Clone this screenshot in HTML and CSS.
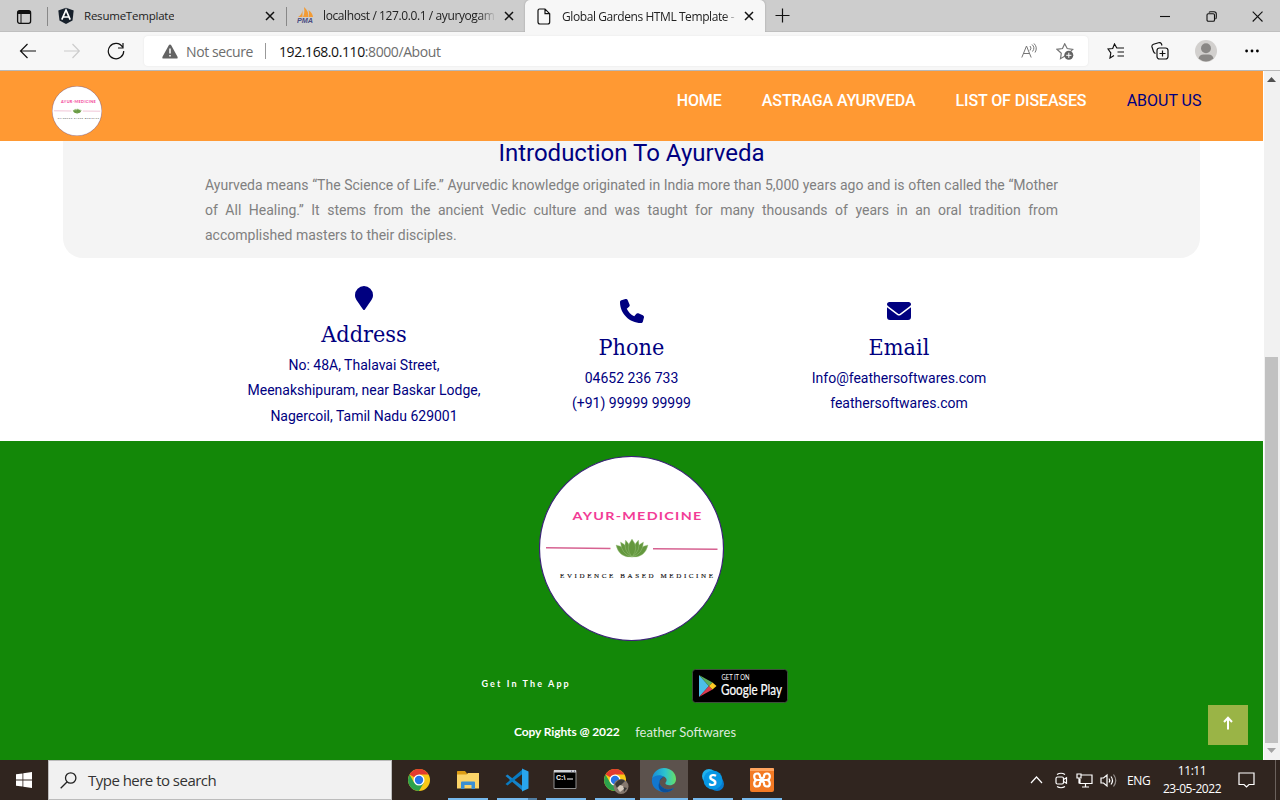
FILE: index.html
```html
<!DOCTYPE html>
<html lang="en">
<head>
<meta charset="utf-8">
<title>Global Gardens HTML Template</title>
<link rel="stylesheet" href="styles.css">
</head>
<body>
<div class="screen">
  <div class="tabstrip">
    <div class="tab-actions"><svg width="16" height="16" viewBox="0 0 16 16"><rect x="1.6" y="1.7" width="13" height="12.6" rx="2" fill="none" stroke="#111" stroke-width="1.3"/><path d="M1.6 5V3.5q0-2 2-2h9q2 0 2 2V5z" fill="#111"/><path d="M5 5v9" stroke="#111"/></svg></div>
    <div class="tab tab-one">
      <svg width="16" height="18" viewBox="0 0 16 18"><path d="M8 .8l7.7 2.7-1.2 10L8 17l-6.500-3.500L.3 3.500z" fill="#17202b"/><path d="M3.800 12.600L8 3l4.200 9.600M5.500 10h5" stroke="#fff" stroke-width="1.700" fill="none"/></svg>
      <span class="tab-title t-resume">ResumeTemplate</span>
      <svg class="close" width="10" height="10" viewBox="0 0 10 10"><path d="M1 1l8 8M9 1l-8 8"/></svg>
    </div>
    <div class="tab tab-two">
      <svg width="17" height="17" viewBox="0 0 17 17"><path d="M1 10Q5 8 5.500 3v7zM6 10Q8 6 7 0q5 4 4 10zM11.500 10q1-4 0-7 4 3 4.500 7z" fill="#f29b35"/><text x="0" y="16" class="pma" textLength="16" lengthAdjust="spacingAndGlyphs">PMA</text></svg>
      <span class="tab-title t-local">localhost / 127.0.0.1 / ayuryogam</span>
      <svg class="close" width="10" height="10" viewBox="0 0 10 10"><path d="M1 1l8 8M9 1l-8 8"/></svg>
    </div>
    <div class="tab tab-active">
      <svg width="14" height="17" viewBox="0 0 14 17"><path d="M2.500 1H8l4.700 4.700V14q0 2-2 2H3q-2 0-2-2V3q0-2 1.500-2zM8 1v4.700h4.700" fill="none" stroke="#111" stroke-width="1.200"/></svg>
      <span class="tab-title t-global">Global Gardens HTML Template -</span>
      <svg class="close" width="10" height="10" viewBox="0 0 10 10"><path d="M1 1l8 8M9 1l-8 8"/></svg>
    </div>
    <svg class="new-tab" width="15" height="15" viewBox="0 0 15 15"><path d="M.5 7.500h14M7.500.5v14" stroke="#111" stroke-width="1.200"/></svg>
    <div class="window-controls">
      <svg width="11" height="11" viewBox="0 0 11 11"><path d="M0 5.500h10"/></svg>
      <svg width="11" height="11" viewBox="0 0 11 11"><rect x="1" y="2.700" width="7.500" height="7.500" rx="1.300"/><path d="M3 1.500Q3.300.7 4.500.7H8q2.300 0 2.300 2.300v3q0 1.700-.9 2"/></svg>
      <svg width="11" height="11" viewBox="0 0 11 11"><path d="M.7.7l9.800 9.800M10.500.7L.7 10.500"/></svg>
    </div>
  </div>

  <div class="toolbar">
    <svg class="tool-nav" width="18" height="16" viewBox="0 0 18 16"><path d="M17 8H1.500M8.500 1L1.500 8l7 7"/></svg>
    <svg class="tool-nav tool-disabled" width="18" height="16" viewBox="0 0 18 16"><path d="M1 8h15M9.500 1l6.800 7-6.800 7"/></svg>
    <svg class="tool-nav" width="18" height="18" viewBox="0 0 18 18"><path d="M15.500 5A7.700 7.700 0 1 0 16.700 9M16 1v5h-5"/></svg>
    <div class="address-bar">
      <svg width="16" height="15" viewBox="0 0 16 15"><path d="M8 .5q.8 0 1.200.8l6.300 11.500q.6 1.700-.9 1.700H1.400q-1.500 0-.9-1.700L6.800 1.300Q7.200.5 8 .5z" fill="#636363"/><path d="M8 4.500v5M8 11v1.600" stroke="#fff" stroke-width="1.500"/></svg>
      <span class="not-secure">Not secure</span>
      <span class="address-divider"></span>
      <span class="url"><b>192.168.0.110</b>:8000/About</span>
      <svg class="read-aloud" width="16" height="16" viewBox="0 0 16 16" fill="none" stroke="#767676"><path d="M.8 14.500L5.500 3l4.700 11.500M2.500 10.500h6M9 3q2 2 0 4.500M11 1.500q3.500 3 .5 7M13 .5q4 4 1 9"/></svg>
      <svg class="add-star" width="18" height="17" viewBox="0 0 18 17"><path d="M9 13l-4.500 2.700.8-5.400L1 6.300l5.500-.8L8.700.8l2.500 4.700 5.500.8-2 2" fill="none" stroke="#767676" stroke-width="1.200"/><circle cx="12.800" cy="12.300" r="4.500" fill="#636363"/><path d="M12.800 9.700v5.200M10.200 12.300h5.200" stroke="#fff"/></svg>
    </div>
    <svg class="favorites" width="18" height="16" viewBox="0 0 18 16" fill="none" stroke="#111" stroke-width="1.200"><path d="M7 12.600l-4 2.400.8-5L1 6l4.700-.5L7.500 1l2.300 4H17M10.500 9H17M10.500 13H17"/></svg>
    <svg class="collections" width="18" height="18" viewBox="0 0 18 18" fill="none" stroke="#111" stroke-width="1.200"><rect x="6" y="6" width="11" height="11" rx="2.500"/><path d="M11.500 8.500v6M8.500 11.500h6M4.500 11.500q-1.500-.5-2-2L1 5q-.5-2 1.500-2.700l5-1.500q2-.6 2.900 1l.6 1.700"/></svg>
    <svg class="profile" width="22" height="22" viewBox="0 0 22 22"><circle cx="11" cy="11" r="11" fill="#d2d0ce"/><circle cx="11" cy="8.300" r="5" fill="#8a8886"/><path d="M3.500 18.500q1-4 5-4h5q4 0 5 4-7.500 6-15 0z" fill="#8a8886"/></svg>
    <svg class="more" width="14" height="4" viewBox="0 0 14 4"><circle cx="1.600" cy="2" r="1.400"/><circle cx="7" cy="2" r="1.400"/><circle cx="12.400" cy="2" r="1.400"/></svg>
  </div>

  <div class="viewport">
    <div class="page">
      <header class="site-header">
        <svg class="brand-small" width="50" height="50" viewBox="0 0 185 185"><use href="#brand"/></svg>
        <nav class="site-nav">
          <a>HOME</a><a>ASTRAGA AYURVEDA</a><a>LIST OF DISEASES</a><a class="current">ABOUT US</a>
        </nav>
      </header>
      <section class="intro">
        <h2>Introduction To Ayurveda</h2>
        <p>Ayurveda means “The Science of Life.” Ayurvedic knowledge originated in India more than 5,000 years ago and is often called the “Mother of All Healing.” It stems from the ancient Vedic culture and was taught for many thousands of years in an oral tradition from accomplished masters to their disciples.</p>
      </section>
      <section class="contacts">
        <div class="contact">
          <svg width="18" height="24" viewBox="0 0 384 512"><path d="M172.300 501.700C27 291 0 269.400 0 192a192 192 0 0 1 384 0c0 77.400-27 99-172.300 309.700a24 24 0 0 1-39.400 0z"/></svg>
          <h3>Address</h3>
          <p>No: 48A, Thalavai Street,<br>Meenakshipuram, near Baskar Lodge,<br>Nagercoil, Tamil Nadu 629001</p>
        </div>
        <div class="contact">
          <svg width="24" height="24" viewBox="0 0 512 512"><path d="M165 25c-8-19-29-29-48-24L29 25C12 30 0 46 0 64c0 247 201 448 448 448 18 0 34-12 39-29l24-88c5-20-5-41-24-49l-96-40c-17-7-36-2-47 12l-40 49c-70-33-127-90-160-160l49-40c14-12 19-31 12-47z"/></svg>
          <h3>Phone</h3>
          <p>04652 236 733<br>(+91) 99999 99999</p>
        </div>
        <div class="contact">
          <svg width="24" height="24" viewBox="0 0 512 512"><path d="M48 64a48 48 0 0 0-29 86l218 164q19 14 38 0l218-164a48 48 0 0 0-29-86zM0 176v208a64 64 0 0 0 64 64h384a64 64 0 0 0 64-64V176L294 339q-38 28-76 0z"/></svg>
          <h3>Email</h3>
          <p>Info@feathersoftwares.com<br>feathersoftwares.com</p>
        </div>
      </section>
      <footer class="site-footer">
        <svg class="brand-large" width="185" height="185" viewBox="0 0 185 185">
          <g id="brand">
            <circle cx="92.500" cy="92.500" r="92" fill="#fff" stroke="#3c2478" stroke-width="1.200"/>
            <text transform="translate(33.500 64) scale(1.250 1)" class="brand-name" textLength="103">AYUR-MEDICINE</text>
            <path d="M7 91.700l64.500.8M114 92.700l64.500.6" stroke="#d66291" stroke-width="1.400"/>
            <g fill="#64983e" stroke="#a3c98a" stroke-width=".4">
              <path d="M93 101Q80 102 77 89q9 1 16 12zM93 101q13 1 16-12-9 1-16 12z"/>
              <path d="M93 101Q82 98 81.500 86 90 90 93 101zM93 101q11-3 11.500-15-8.500 4-11.500 15z"/>
              <path d="M93 101Q84 95 86.500 84 93 90 93 101zM93 101q9-6 6.500-17-6.500 6-6.500 17z"/>
              <path d="M93 101Q85.500 92 93 83q7.500 9 0 18z"/>
            </g>
            <text x="21" y="121.700" class="brand-tag" textLength="153">EVIDENCE BASED MEDICINE</text>
          </g>
        </svg>
        <div class="app-row">
          <span class="get-app">Get In The App</span>
          <svg class="play-badge" width="96" height="34" viewBox="0 0 96 34"><rect x=".5" y=".5" width="95" height="33" rx="3" fill="#000" stroke="#555" stroke-width=".7"/><path d="M7 6v22l10-11z" fill="#4cbfe8"/><path d="M7 6l10 11 3.500-3.500z" fill="#5cae5b"/><path d="M7 28l10-11 3.500 3.500z" fill="#dc3b50"/><path d="M17 17l3.500-3.600 4 3.600-4 3.600z" fill="#fdca24"/><text x="29.500" y="11" class="badge-top" textLength="28" lengthAdjust="spacingAndGlyphs">GET IT ON</text><text x="29" y="25.500" class="badge-main" textLength="61" lengthAdjust="spacingAndGlyphs">Google Play</text></svg>
        </div>
        <div class="copy-row"><span class="copyright">Copy Rights @ 2022</span><span class="company">feather Softwares</span></div>
        <div class="to-top"><svg width="12" height="14" viewBox="0 0 12 14"><path d="M6 13.500V2M2 6l4-4.300L10 6" fill="none" stroke="#fff" stroke-width="2"/></svg></div>
      </footer>
    </div>
    <div class="scrollbar">
      <svg width="9" height="5" viewBox="0 0 9 5"><path d="M0 5L4.500 0 9 5z" fill="#505050"/></svg>
      <div class="thumb"></div>
      <svg width="9" height="5" viewBox="0 0 9 5"><path d="M0 0l4.500 5L9 0z" fill="#a3a3a3"/></svg>
    </div>
  </div>

  <div class="taskbar">
    <div class="start"><svg width="16" height="16" viewBox="0 0 16 16" fill="#fff"><path d="M0 2.300l6.500-.9v6.100H0zM7.300 1.300L16 0v7.500H7.300zM0 8.400h6.500v6.200L0 13.700zM7.300 8.400H16V16l-8.700-1.200z"/></svg></div>
    <div class="search"><svg width="17" height="17" viewBox="0 0 17 17" fill="none" stroke="#222" stroke-width="1.300"><circle cx="10.700" cy="6" r="5.200"/><path d="M7 10L.7 16.300"/></svg><span>Type here to search</span></div>
    <div class="apps">
      <div class="app"><svg width="24" height="24" viewBox="0 0 24 24"><g id="chrome"><circle cx="12" cy="12" r="11" fill="#f9c916"/><path d="M12 12L2.500 6.500A11 11 0 0 1 21.500 6.500H12z" fill="#e33b2e"/><path d="M2.500 6.500A11 11 0 0 0 12 23l4.800-8.300L12 12 7.200 14.700z" fill="#2ba24c"/><circle cx="12" cy="12" r="5.500" fill="#fff"/><circle cx="12" cy="12" r="4.200" fill="#2674e8"/></g></svg></div>
      <div class="app open"><svg width="24" height="24" viewBox="0 0 24 24"><path d="M1 3.500q0-.5.500-.5H9l2 2.500V8H1z" fill="#dd9d14"/><path d="M1 6.500h9.500L12 5h11v15.500H1z" fill="#fbd468"/><path d="M5 21v-6.500q0-1 1-1h12q1 0 1 1V21h-3.500v-4h-7v4z" fill="#3a8fd4"/></svg></div>
      <div class="app open stacked"><svg width="24" height="24" viewBox="0 0 24 24"><path d="M.5 8L2.500 6.500 18 18.500V23z" fill="#1684ca"/><path d="M.5 16l2 1.500L18 5.500V1z" fill="#087bc2"/><path d="M17 .5l6.500 3v17l-6.500 3z" fill="#29a5ed"/></svg></div>
      <div class="app open"><svg class="console" width="24" height="24" viewBox="0 0 24 24"><path d="M1 2.500h22v18H1z" fill="#000" stroke="#909090"/><path d="M1 2h22v2.500H1z" fill="#ced1d5"/><path d="M18 3.200h1M21 3.200h1" stroke="#557"/><text x="3" y="11.500" class="cmd">C:\</text><path d="M14 11h6" stroke="#fff"/></svg></div>
      <div class="app open"><svg class="chrome-user" width="26" height="26" viewBox="0 0 26 26"><use href="#chrome"/><circle cx="18" cy="18.500" r="7.500" fill="#85786e"/><path d="M12 16q5-7 10-3l-4 4-3 5zM20 19l4 1-3 4z" fill="#3b3936"/><path d="M14 20l3-3 3 1 1 3-4 3z" fill="#d6cbbd"/></svg></div>
      <div class="app open focused"><svg width="26" height="26" viewBox="0 0 26 26"><defs><linearGradient id="edgeTop"><stop stop-color="#168bd7"/><stop offset=".55" stop-color="#2cc3cf"/><stop offset="1" stop-color="#67df65"/></linearGradient></defs><path d="M1 12C2 5 7 1 13 1c7 0 12 5 12 11 0 5-4 7-8 6-3-.7-3-2-2-3 2-3-1-6-5-6-4-.5-7 .5-9 3z" fill="url(#edgeTop)"/><path d="M1 12c2-4 9-5 12-2-5 1-6 7-2 10 3 3 8 3 12 1-3 4-8 5-11 4C5 24 0 19 1 12z" fill="#1277ce"/><path d="M13 10c-5 1-6 7-2 10 3 3 8 3 12 1-3 4-8 5-11 4-6-2-6-11 1-15z" fill="#0b4f99"/></svg></div>
      <div class="app open"><svg width="24" height="24" viewBox="0 0 24 24"><circle cx="8" cy="8" r="7" fill="#20b2ed"/><circle cx="16" cy="16" r="7" fill="#067bd0"/><circle cx="12" cy="12" r="9.500" fill="#0797e4"/><text x="7.200" y="17.500" class="skype">S</text></svg></div>
      <div class="app open"><svg width="24" height="24" viewBox="0 0 24 24"><rect width="24" height="24" rx="2" fill="#f37a24"/><path d="M0 3V1q0-1 1-1h22q1 0 1 1v2z" fill="#ffa55f"/><path d="M9 5.500H7q-2.800 0-2.800 2.700Q4.200 12 7.500 12q-3.300 0-3.300 3.700 0 2.800 2.800 2.800 3 0 3-3V15q0-1.500 2-1.500t2 1.500v.5q0 3 3 3 2.800 0 2.800-2.800Q19.800 12 16.500 12q3.300 0 3.300-3.800 0-2.700-2.800-2.700-3 0-3 3 0 1.500-2 1.500t-2-1.500q0-3-3-3M7 12h10" fill="none" stroke="#fff" stroke-width="2.200"/></svg></div>
    </div>
    <div class="tray">
      <svg width="13" height="8" viewBox="0 0 13 8"><path d="M1 7l5.500-6L12 7"/></svg>
      <svg class="meet" width="13" height="17" viewBox="0 0 13 17"><rect x="1" y="5" width="7.500" height="7" rx="1.500"/><path d="M8.500 7.500l3-1.700v5.400l-3-1.700M2 2.500Q6 0 10 2.500M2 14.500q4 2.500 8 0"/></svg>
      <svg class="network" width="17" height="15" viewBox="0 0 17 15"><path d="M5.500 2H16v8.500H4V6M1 1h4v4H1zM3 5v5.500M9.500 10.500V14M6 14h7"/></svg>
      <svg class="volume" width="17" height="15" viewBox="0 0 17 15"><path d="M1 5h2.500L7 2v11L3.500 10H1zM9 5.500q1.500 2 0 4M11 3.500q3 4 0 8"/><path d="M13.500 1.500q4.500 6 0 12" opacity=".5"/></svg>
      <span class="lang">ENG</span>
      <div class="clock"><span>11:11</span><span>23-05-2022</span></div>
      <svg class="notice" width="17" height="16" viewBox="0 0 17 16"><path d="M1 1h15v11.500h-5L8.500 15 6 12.500H1z"/></svg>
      <span class="show-desktop"></span>
    </div>
  </div>
</div>
</body>
</html>
```
FILE: styles.css
```css
* { box-sizing: border-box; }
body { margin: 0; overflow: hidden; font-family: "Open Sans", sans-serif; }
svg { display: block; flex: none; }
h2, h3, p { margin: 0; font-weight: 400; }
.screen { width: 1280px; height: 800px; display: flex; flex-direction: column; overflow: hidden; background: #fff; }

.tabstrip { height: 32px; flex: none; display: flex; align-items: stretch; background: #cdcdcd; border-bottom: 1px solid #bfbfbf; font-size: 12px; color: #222; }
.tab-actions { width: 48px; display: flex; align-items: center; padding-left: 16px; border-right: 1px solid #888; height: 19px; margin-top: 7px; }
.tab { display: flex; align-items: center; white-space: nowrap; }
.tab-title { overflow: hidden; flex: none; }
.tab-one { width: 239px; padding: 0 12px 0 10px; position: relative; }
.tab-one::after { content: ""; position: absolute; right: 0; top: 7px; height: 19px; width: 1px; background: #888; }
.tab-two { width: 238px; padding-left: 10px; }
.close { margin-left: auto; stroke: #111; stroke-width: 1.5; }
.t-resume { margin-left: 10px; font-size: 11.5px; letter-spacing: -.22px; }
.t-local { width: 173px; margin-left: 9px; letter-spacing: -.4px; -webkit-mask-image: linear-gradient(90deg, #000 90%, transparent); }
.tab-two .close { margin-left: 8px; }
.tab-active { width: 240px; height: 32px; background: #f7f7f7; border-radius: 5px 5px 0 0; padding: 0 12px; box-shadow: 0 0 2px #999; clip-path: inset(0 -3px 0 -3px); }
.t-global { margin-left: 11px; width: 176px; letter-spacing: -.42px; -webkit-mask-image: linear-gradient(90deg, #000 92%, transparent); }
.tab-active .close { margin-left: 6px; }
.new-tab { margin: 8px 0 0 10px; }
.window-controls { margin-left: auto; display: flex; gap: 35px; padding: 11px 17.5px 0 0; }
.window-controls svg { fill: none; stroke: #111; stroke-width: 1.1; }
.pma { font: italic 700 6.5px "Liberation Sans", sans-serif; fill: #4b4d83; }

.toolbar { height: 38px; flex: none; display: flex; align-items: center; background: #f7f7f7; padding-left: 19px; }
.tool-nav { fill: none; stroke: #111; stroke-width: 1.2; margin-right: 26px; }
.tool-disabled { stroke: #ccc; }
.address-bar { width: 944px; height: 30px; background: #fff; border-radius: 4px; box-shadow: 0 0 2px #e3e3e3; display: flex; align-items: center; padding: 0 14px 0 18px; margin-left: -7px; font-size: 14px; color: #6d6d6d; }
.not-secure { margin-left: 8px; width: 79px; letter-spacing: -.4px; white-space: nowrap; }
.address-divider { width: 1px; height: 16px; background: #999; margin-right: 13px; }
.url { letter-spacing: -.41px; }
.url b { color: #111; font-weight: 400; }
.read-aloud { margin-left: auto; margin-right: 19px; }
.favorites { margin-left: 19px; }
.collections { margin-left: 26px; }
.profile { margin-left: 26px; }
.more { margin-left: 28px; }

.viewport { height: 690px; flex: none; display: flex; border-top: 1px solid #b8b8b8; }
.page { width: 1263px; display: flex; flex-direction: column; font-family: Roboto, sans-serif; }
.site-header { height: 70px; flex: none; display: flex; background: #ff9933; padding-left: 52px; position: relative; z-index: 1; }
.brand-small { margin-top: 15px; }
.site-nav { display: flex; gap: 40.2px; margin-left: auto; padding: 18px 61.5px 0 0; font-size: 16px; line-height: 24px; font-weight: 500; letter-spacing: -.12px; color: #fff; white-space: nowrap; }
.site-nav .current { color: #000080; font-weight: 400; letter-spacing: 0; }
.intro { height: 117px; flex: none; margin: 0 63px; background: #f4f4f4; border-radius: 0 0 20px 20px; padding: 0 142px; }
.intro h2 { margin-top: -2px; font-size: 24px; line-height: 29px; color: #000080; text-align: center; }
.intro p { margin-top: 5px; font-size: 14px; line-height: 25.2px; color: #808080; text-align: justify; }
.contacts { height: 183px; flex: none; display: grid; grid-template-columns: repeat(3, 267.5px); justify-content: center; align-items: center; padding-top: 16px; color: #000080; text-align: center; }
.contact svg { margin: 0 auto; fill: #000080; }
.contact h3 { font: 23.2px/31px "DejaVu Serif Condensed", "DejaVu Serif", serif; margin-top: 8px; }
.contact p { margin-top: 4.2px; font-size: 14px; line-height: 25.2px; white-space: nowrap; }

.site-footer { flex: 1; background: #138808; display: flex; flex-direction: column; align-items: center; padding-top: 15px; position: relative; font-family: Lato, sans-serif; color: #fff; }
.brand-name { font: 700 11.5px Lato, sans-serif; fill: #f23c96; }
.brand-tag { font: 7px "Liberation Serif", serif; fill: #111; stroke: #111; stroke-width: .15px; }
.app-row { display: flex; align-items: center; justify-content: space-between; width: 306px; margin: 28px 0 0 6px; }
.get-app { font-size: 9px; font-weight: 700; letter-spacing: 2.1px; margin-top: -6px; }
.badge-top { font: 7px Lato, sans-serif; fill: #fff; }
.badge-main { font: 15px Lato, sans-serif; fill: #fff; stroke: #fff; stroke-width: .2px; }
.copy-row { display: flex; gap: 15.5px; align-items: center; margin: 19px 0 0 -13px; line-height: 20px; }
.copyright { font-size: 12px; font-weight: 700; letter-spacing: -.1px; }
.company { font-size: 13px; color: #dceadb; }
.to-top { position: absolute; right: 15px; bottom: 15px; width: 40px; height: 40px; background: #9ab446; display: flex; justify-content: center; padding-top: 11px; }
.scrollbar { width: 17px; background: #f1f1f1; display: flex; flex-direction: column; align-items: center; padding: 6px 1px 7px 0; border-left: 1px solid #fff; }
.thumb { width: 13px; height: 386px; background: #c1c1c1; margin-top: auto; margin-bottom: 5px; }

.taskbar { height: 40px; flex: none; display: flex; background: #30251f; color: #fff; }
.start { width: 48px; display: flex; align-items: center; justify-content: center; }
.search { width: 344px; background: #f1f1f1; border: 1px solid #bcbcbc; display: flex; align-items: center; gap: 11px; padding-left: 11px; font-size: 15px; color: #333; }
.search span { letter-spacing: -.52px; }
.apps { display: flex; gap: 1px; margin-left: 3px; }
.app { width: 48px; display: flex; align-items: center; justify-content: center; position: relative; }
.open::after { content: ""; position: absolute; left: 4px; right: 4px; bottom: 0; height: 2px; background: #76b9ed; }
.stacked::after { background: linear-gradient(90deg, #76b9ed 31px, #527fa4 31px); }
.focused { background: #5c524d; }
.focused::after { left: 0; right: 0; }
.console { margin-right: 2px; }
.chrome-user { margin: 2px 0 0 2px; }
.cmd { font: 700 7px "Liberation Sans", sans-serif; fill: #fff; }
.skype { font: 700 15.5px "Open Sans", sans-serif; fill: #fff; }
.tray { margin-left: auto; display: flex; align-items: center; padding-right: 4px; }
.tray svg { fill: none; stroke: #fff; stroke-width: 1.2; }
.meet { margin-left: 12px; }
.network { margin-left: 8px; }
.volume { margin-left: 7px; }
.lang { width: 24px; margin-left: 10px; font-size: 12px; letter-spacing: -.4px; }
.clock { width: 60px; margin-left: 11px; display: flex; flex-direction: column; align-items: center; font-size: 12px; line-height: 18px; letter-spacing: -.45px; white-space: nowrap; }
.tray .notice { margin-left: 16px; }
.show-desktop { width: 1px; height: 40px; margin-left: 20px; background: #6b625d; }
```
